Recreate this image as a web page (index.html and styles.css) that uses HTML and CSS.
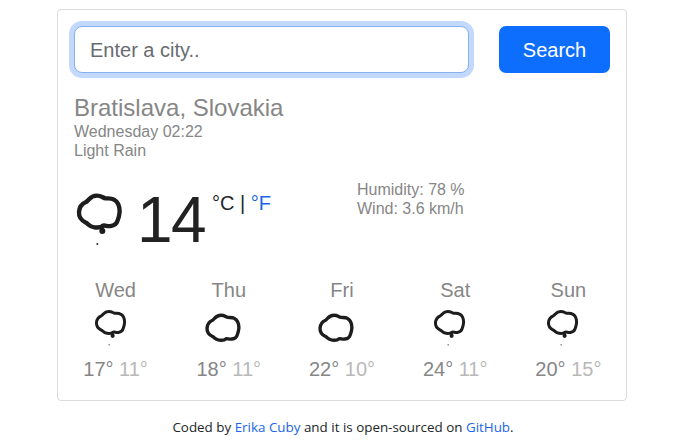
FILE: index.html
```html
<!DOCTYPE html>
<html lang="en">
<head>
<meta charset="utf-8">
<title>Weather</title>
<link rel="stylesheet" href="styles.css">
</head>
<body>
<svg class="defs" aria-hidden="true">
  <symbol id="cloud" viewBox="0 0 180 150">
    <path d="M48 51C57 46 60 32 80 32C96 32 98 39 107 40C115 41 124 39 132 44C145 51 149 65 149 80C148 90 146 99 143 106C140 118 132 122 122 123C112 125 106 120 99 122C93 129 82 128 73 127C58 125 56 118 48 113C35 107 26 96 27 81C28 65 36 56 48 51Z"/>
  </symbol>
  <symbol id="rain" viewBox="0 0 180 195">
    <path d="M48 51C57 46 60 32 80 32C96 32 98 39 107 40C115 41 124 39 132 44C145 51 149 65 149 80C148 90 146 99 143 106C140 118 132 122 122 123C112 125 106 120 99 122C93 129 82 128 73 127C58 125 56 118 48 113C35 107 26 96 27 81C28 65 36 56 48 51Z"/>
    <circle class="drop" cx="97" cy="138" r="9"/>
    <path class="stem" d="M98 117v18"/>
    <circle class="drop" cx="82" cy="177" r="2.8"/>
  </symbol>
</svg>
<main class="card">
  <form class="search">
    <input class="city-input" type="text" placeholder="Enter a city..">
    <button class="submit" type="button">Search</button>
  </form>
  <section class="overview">
    <h1>Bratislava, Slovakia</h1>
    <div>Wednesday 02:22</div>
    <div>Light Rain</div>
  </section>
  <section class="current">
    <svg class="icon-main"><use href="#rain"/></svg>
    <strong class="temperature">14</strong>
    <span class="units">°C | <a href="#">°F</a></span>
    <div class="details"><div>Humidity: 78 %</div><div>Wind: 3.6 km/h</div></div>
  </section>
  <section class="forecast">
    <div class="day"><div>Wed</div><svg class="icon"><use href="#rain"/></svg><div class="temps">17° <span>11°</span></div></div>
    <div class="day"><div>Thu</div><svg class="icon clear"><use href="#cloud"/></svg><div class="temps">18° <span>11°</span></div></div>
    <div class="day"><div>Fri</div><svg class="icon clear"><use href="#cloud"/></svg><div class="temps">22° <span>10°</span></div></div>
    <div class="day"><div>Sat</div><svg class="icon"><use href="#rain"/></svg><div class="temps">24° <span>11°</span></div></div>
    <div class="day"><div>Sun</div><svg class="icon"><use href="#rain"/></svg><div class="temps">20° <span>15°</span></div></div>
  </section>
</main>
<footer>Coded by <a href="#">Erika Cuby</a> and it is open-sourced on <a href="#">GitHub</a>.</footer>
</body>
</html>
```
FILE: styles.css
```css
* { box-sizing: border-box; }
body {
  margin: 0;
  padding-top: 9px;
  background: #fff;
  color: #212529;
  font-family: "Liberation Sans", Arial, sans-serif;
  overflow: hidden;
}
a { color: #1a66e8; text-decoration: none; }
.defs { display: none; }
.card {
  width: 570px;
  height: 392px;
  margin-left: 57px;
  border: 1px solid #dcdcdc;
  border-radius: 4px;
}
.search { display: flex; gap: 30px; padding: 16px 16px 0; }
.city-input {
  width: 395px;
  height: 47px;
  padding: 2px 15px 0;
  border: 1px solid #86b0ee;
  border-radius: 8px;
  box-shadow: 0 0 0 5px #c2d8fc;
  font: 20px "Liberation Sans", Arial, sans-serif;
  outline: 0;
}
.city-input::placeholder { color: #686c70; opacity: 1; }
.submit {
  width: 111px;
  height: 47px;
  padding: 1px 0 0;
  border: 0;
  border-radius: 7px;
  background: #0d6efd;
  color: #fff;
  font: 20px "Liberation Sans", Arial, sans-serif;
}
.overview {
  padding: 20px 16px 0;
  color: #868686;
  font-size: 16px;
  line-height: 19px;
}
.overview h1 { margin: 0; font-size: 24px; font-weight: 400; line-height: 29px; }
.current { display: flex; height: 118px; padding: 19px 0 0 12px; }
.icon-main { width: 60px; height: 65px; margin-top: 6px; }
svg { fill: none; stroke: #1d1d1d; stroke-width: 13; stroke-linejoin: round; }
.drop { fill: #1d1d1d; stroke: none; }
.stem { stroke-width: 9; }
.temperature {
  width: 74px;
  margin-left: 7px;
  font-size: 64px;
  font-weight: 400;
  line-height: 82px;
  color: #222;
  letter-spacing: -1.5px;
}
.units { margin-left: 1px; padding-top: 12px; width: 145px; font-size: 20px; line-height: 24px; }
.details { color: #868686; font-size: 16px; line-height: 19px; padding-top: 1px; }
.forecast {
  display: grid;
  grid-template-columns: repeat(5, 1fr);
  padding: 0 1px;
  color: #868686;
  font-size: 20px;
  line-height: 24px;
  text-align: center;
}
.icon { display: block; width: 42px; height: 45px; margin: 3px auto 0; transform: translate(-5px, -1px); }
.icon.clear { width: 47px; height: 45px; transform: translate(-5px, -1px); }
.temps { margin-top: 7px; }
.temps span { color: #b8b8b8; }
footer {
  margin-top: 16px;
  text-align: center;
  font: 13.4px/20px "Open Sans", "Noto Sans", sans-serif;
}
```
